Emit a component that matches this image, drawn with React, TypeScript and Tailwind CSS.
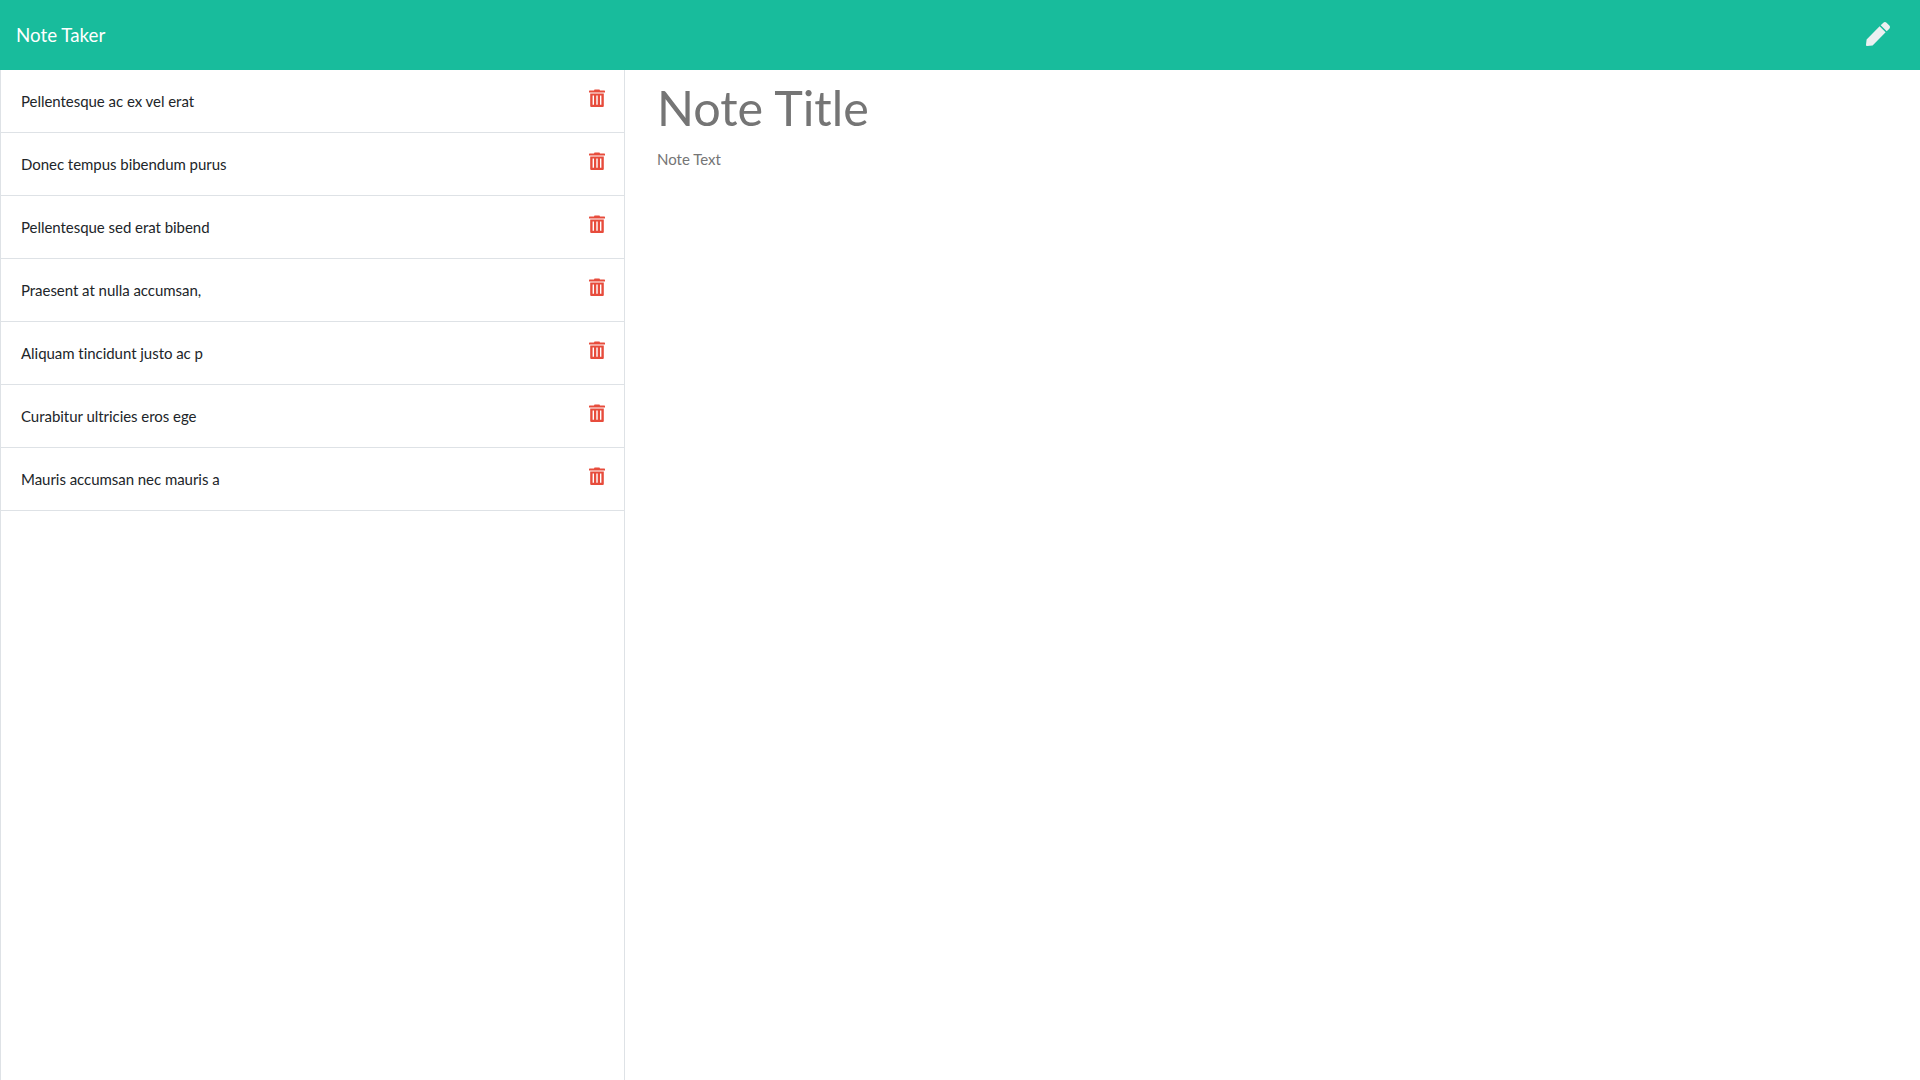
import { FaPen } from "react-icons/fa";

const NOTES = [
  "Pellentesque ac ex vel erat",
  "Donec tempus bibendum purus",
  "Pellentesque sed erat bibend",
  "Praesent at nulla accumsan,",
  "Aliquam tincidunt justo ac p",
  "Curabitur ultricies eros ege",
  "Mauris accumsan nec mauris a",
];

function TrashIcon() {
  return (
    <svg viewBox="0 0 16 18" className="mt-[-1px] h-[18px] w-4 text-[#e74c3c]" fill="currentColor">
      <path d="M5.5 0.4h5L11 1.4h4.4a.6.6 0 0 1 .6.6v1.4H0V2a.6.6 0 0 1 .6-.6H5z" />
      <path
        fillRule="evenodd"
        d="M1.2 4.6h13.6V17a1 1 0 0 1-1 1H2.2a1 1 0 0 1-1-1zM3.6 6.6v9.2h1.4V6.6zM7.3 6.6v9.2h1.4V6.6zM11 6.6v9.2h1.4V6.6z"
      />
    </svg>
  );
}

export default function App() {
  return (
    <div className="h-screen overflow-hidden bg-white font-['Lato',sans-serif] text-[15px] text-[#212529]">
      {/* Navbar */}
      <nav className="flex h-[70px] items-center justify-between bg-[#18bc9c] pl-4 pr-[30px]">
        <span className="text-[18.75px] text-white">Note Taker</span>
        <FaPen className="mb-[2px] h-6 w-6 text-[#ecf0f1]" />
      </nav>

      <div className="flex h-[1010px]">
        {/* Notes list */}
        <div className="w-[625px] border-x border-[#dee2e6]">
          {NOTES.map((note) => (
            <div key={note} className="flex h-[63px] items-start justify-between border-b border-[#dee2e6] pl-5 pr-[19px] pt-5">
              <span className="leading-[23px] tracking-[-0.04px]">{note}</span>
              <TrashIcon />
            </div>
          ))}
        </div>

        {/* Editor */}
        <div className="flex-1 pl-8 pt-2">
          <div className="text-[48.5px] leading-[58px] text-[#757575]">Note Title</div>
          <div className="mt-3 text-[15px] leading-[23px] text-[#757575]">Note Text</div>
        </div>
      </div>
    </div>
  );
}
